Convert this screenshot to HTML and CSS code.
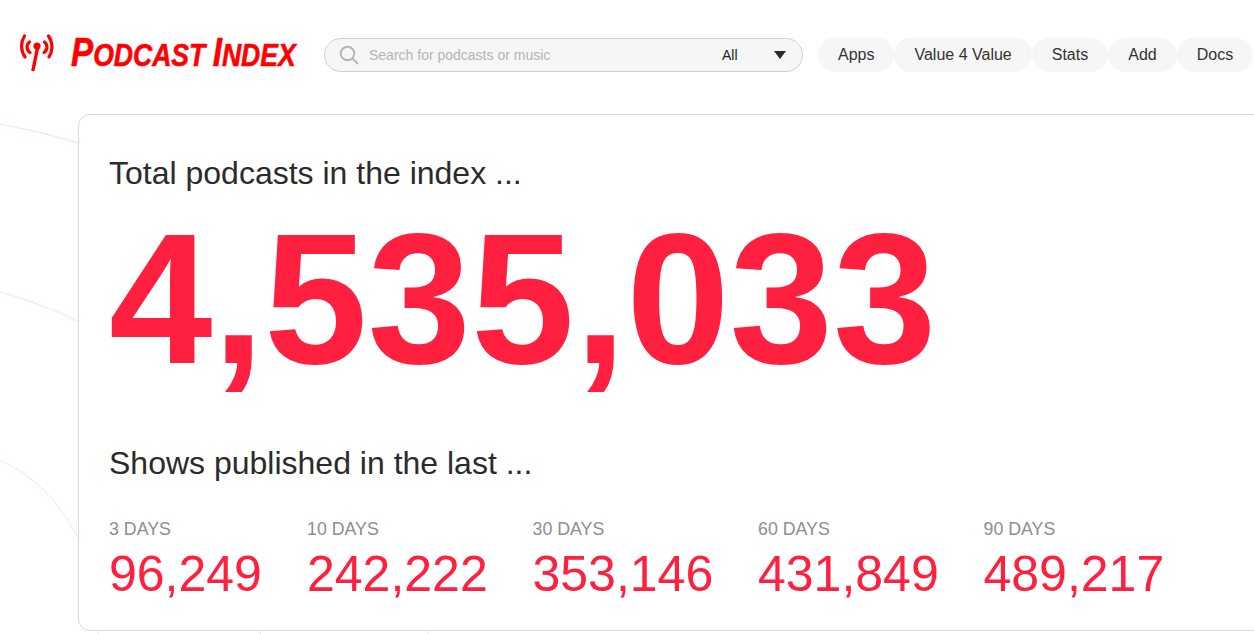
FILE: index.html
```html
<!DOCTYPE html>
<html lang="en">
<head>
<meta charset="utf-8">
<title>Podcast Index</title>
<link rel="stylesheet" href="styles.css">
</head>
<body>
<svg class="arcs" width="1254" height="634" viewBox="0 0 1254 634" aria-hidden="true">
  <path d="M0 124 Q40 131 78 143"/>
  <path d="M0 292 Q40 303 78 321"/>
  <path d="M0 460 Q50 483 78 538"/>
  <path d="M98 630V634M260.500 630V634M428 630V634"/>
</svg>
<header class="topbar">
  <a class="logo">
    <svg class="logo-icon" width="38" height="38" viewBox="0 0 38 38" aria-hidden="true">
      <circle cx="19" cy="12" r="3.600" fill="#f00"/>
      <path class="mast" d="M19.500 14L14.800 37"/>
      <path class="wave" d="M11.500 8A6.500 6.500 0 0 0 12 18.500"/>
      <path class="wave" d="M26.500 8A6.500 6.500 0 0 1 26 18.500"/>
      <path class="wave" d="M6.500 2A19 19 0 0 0 7 23"/>
      <path class="wave" d="M30.500 2A19 19 0 0 1 31 23"/>
    </svg>
    <span class="logo-text"><span class="logo-cap">P</span>odcast <span class="logo-cap">I</span>ndex</span>
  </a>
  <div class="search">
    <svg class="search-icon" width="20" height="20" viewBox="0 0 20 20" aria-hidden="true">
      <circle cx="8.500" cy="8.500" r="6.800"/>
      <path d="M13.500 13.500L19 19"/>
    </svg>
    <span class="placeholder">Search for podcasts or music</span>
    <span class="scope">All</span>
    <span class="caret"></span>
  </div>
  <nav class="nav">
    <a class="pill">Apps</a>
    <a class="pill">Value 4 Value</a>
    <a class="pill">Stats</a>
    <a class="pill">Add</a>
    <a class="pill">Docs</a>
  </nav>
</header>
<main class="card">
  <h2 class="heading">Total podcasts in the index ...</h2>
  <div class="total">4,535,033</div>
  <h2 class="heading heading-second">Shows published in the last ...</h2>
  <div class="stats">
    <div class="stat stat-a"><div class="stat-label">3 DAYS</div><div class="stat-value">96,249</div></div>
    <div class="stat stat-b"><div class="stat-label">10 DAYS</div><div class="stat-value">242,222</div></div>
    <div class="stat stat-b"><div class="stat-label">30 DAYS</div><div class="stat-value">353,146</div></div>
    <div class="stat stat-b"><div class="stat-label">60 DAYS</div><div class="stat-value">431,849</div></div>
    <div class="stat stat-b"><div class="stat-label">90 DAYS</div><div class="stat-value">489,217</div></div>
  </div>
</main>
</body>
</html>
```
FILE: styles.css
```css
html, body { margin: 0; padding: 0; height: 634px; overflow: hidden; background: #fff; }
body { font-family: "Liberation Sans", Arial, sans-serif; color: #2b2b2b; position: relative; }
.arcs { position: absolute; left: 0; top: 0; }
.arcs path { fill: none; stroke: #fbdfe3; stroke-width: 1; }
.topbar { position: relative; display: flex; align-items: center; height: 38px; padding: 36px 0 0 0; }
.logo { display: flex; align-items: center; width: 324px; flex: none; height: 38px; padding-left: 18px; box-sizing: border-box; }
.logo-icon { flex: none; margin-top: -4px; }
.mast { stroke: #f00; stroke-width: 3.400; fill: none; stroke-linecap: butt; }
.wave { stroke: #f00; stroke-width: 3.200; fill: none; stroke-linecap: round; }
.logo-text { margin-left: 15px; margin-top: -5px; font-size: 32px; font-weight: 700; font-style: italic; text-transform: uppercase; color: #f00; white-space: nowrap; transform: scaleX(0.83); transform-origin: left center; -webkit-text-stroke: 0.6px #f00; }
.logo-cap { font-size: 40px; }
.search { flex: none; width: 479px; height: 34px; box-sizing: border-box; border: 1px solid #cfcfcf; border-radius: 17px; background: #f6f6f6; display: flex; align-items: center; padding-left: 14px; }
.search-icon { flex: none; fill: none; stroke: #b5b5b5; stroke-width: 2; }
.placeholder { margin-left: 10px; font-size: 14px; color: #b4b4b4; width: 353px; flex: none; }
.scope { font-size: 14px; color: #222; width: 52px; flex: none; }
.caret { width: 0; height: 0; border-left: 6.500px solid transparent; border-right: 6.500px solid transparent; border-top: 8px solid #2b2b2b; }
.nav { display: flex; margin-left: 15px; }
.pill { height: 34px; line-height: 34px; padding: 0 20px; border-radius: 17px; background: #f6f6f6; font-size: 16px; color: #333; white-space: nowrap; }
.card { position: relative; box-sizing: border-box; margin: 40px 0 0 78px; width: 1190px; height: 517px; background: #fff; border: 1px solid #d9d9d9; border-radius: 12px; padding: 40px 0 0 30px; }
.heading { margin: 0; font-size: 32px; line-height: 36px; font-weight: 400; color: #2b2b2b; }
.total { font-size: 186px; line-height: 214px; margin-top: 1px; font-weight: 700; color: #ff2040; white-space: nowrap; }
.heading-second { margin-top: 39px; }
.stats { display: flex; margin-top: 38px; }
.stat { flex: none; }
.stat-a { width: 198px; }
.stat-b { width: 225.500px; }
.stat-label { font-size: 17.800px; line-height: 20px; color: #8e8e8e; }
.stat-value { font-size: 50px; line-height: 58px; color: #ff2040; margin-top: 6px; }
```
